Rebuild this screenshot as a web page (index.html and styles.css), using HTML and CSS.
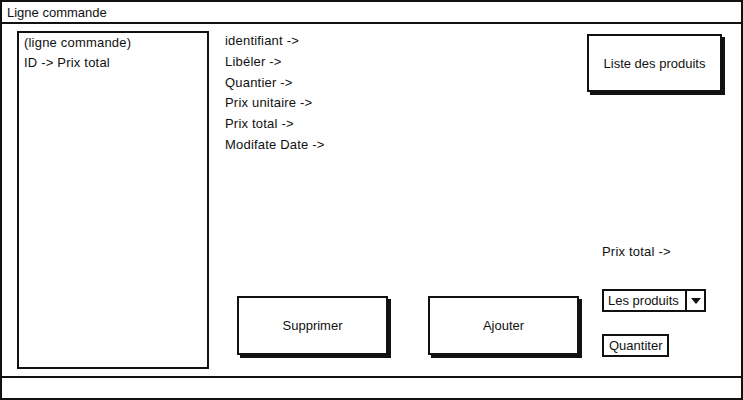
FILE: index.html
```html
<!DOCTYPE html>
<html lang="fr">
<head>
  <meta charset="UTF-8">
  <title>Ligne commande</title>
  <link rel="stylesheet" href="styles.css">
</head>
<body>
  <div class="window">
    <div class="titlebar">Ligne commande</div>

    <div class="main">
      <div class="list">
        <div>(ligne commande)</div>
        <div>ID -&gt; Prix total</div>
      </div>

      <div class="details">
        <div class="fields">
          <div>identifiant -&gt;</div>
          <div>Libéler -&gt;</div>
          <div>Quantier -&gt;</div>
          <div>Prix unitaire -&gt;</div>
          <div>Prix total -&gt;</div>
          <div>Modifate Date -&gt;</div>
        </div>
        <div class="actions">
          <button class="btn big">Supprimer</button>
          <button class="btn big">Ajouter</button>
        </div>
      </div>

      <div class="side">
        <button class="btn products">Liste des produits</button>
        <div class="total">Prix total -&gt;</div>
        <div class="select">
          <span class="select-text">Les produits</span>
          <span class="select-arrow"></span>
        </div>
        <div class="qty">Quantiter</div>
      </div>
    </div>

    <div class="statusbar"></div>
  </div>
</body>
</html>
```

FILE: styles.css
```css
body {
  margin: 0;
  background: #fff;
  font-family: "Liberation Sans", Arial, sans-serif;
  font-size: 13px;
  color: #111;
}

.window {
  width: 743px;
  height: 400px;
  box-sizing: border-box;
  border: 2px solid #111;
  display: flex;
  flex-direction: column;
}

.titlebar {
  height: 20px;
  line-height: 21px;
  padding-left: 5px;
  border-bottom: 2px solid #111;
  flex-shrink: 0;
}

.main {
  flex: 1;
  min-height: 0;
  display: flex;
}

.list {
  width: 192px;
  height: 338px;
  box-sizing: border-box;
  margin: 7px 0 0 15px;
  border: 2px solid #111;
  padding: 0 0 0 5px;
  line-height: 20px;
  letter-spacing: 0.2px;
}

.details {
  width: 362px;
  margin-left: 16px;
  display: flex;
  flex-direction: column;
}

.fields {
  padding-top: 7px;
  line-height: 20.8px;
  letter-spacing: 0.2px;
}

.actions {
  margin-top: auto;
  margin-bottom: 21px;
  padding-left: 12px;
  display: flex;
  gap: 40px;
}

.btn {
  font-family: "Liberation Sans", Arial, sans-serif;
  font-size: 13px;
  color: #111;
  background: #fff;
  border: 2px solid #111;
  box-shadow: 3px 3px 0 #111;
  border-radius: 0;
  padding: 0;
}

.big {
  width: 151px;
  height: 59px;
}

.side {
  display: flex;
  flex-direction: column;
  align-items: flex-start;
}

.products {
  width: 135px;
  height: 58px;
  margin-top: 10px;
}

.total {
  margin: 152px 0 0 15px;
  line-height: 16px;
  letter-spacing: 0.2px;
}

.select {
  margin: 29px 0 0 15px;
  width: 104px;
  height: 23px;
  box-sizing: border-box;
  border: 2px solid #111;
  display: flex;
}

.select-text {
  flex: 1;
  padding-left: 4px;
  line-height: 19px;
}

.select-arrow {
  width: 17px;
  border-left: 2px solid #111;
  position: relative;
}

.select-arrow::after {
  content: "";
  position: absolute;
  left: 4px;
  top: 7px;
  border-left: 5px solid transparent;
  border-right: 5px solid transparent;
  border-top: 6px solid #111;
}

.qty {
  margin: 22px 0 0 15px;
  height: 23px;
  box-sizing: border-box;
  border: 2px solid #111;
  padding: 0 5px;
  line-height: 19px;
}

.statusbar {
  height: 20px;
  border-top: 2px solid #111;
  flex-shrink: 0;
}
```
